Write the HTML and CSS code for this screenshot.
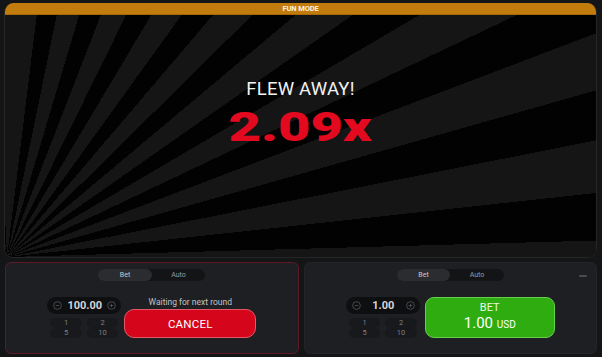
FILE: index.html
```html
<!DOCTYPE html>
<html>
<head>
<meta charset="utf-8">
<link rel="stylesheet" href="styles.css">
</head>
<body>
<div class="app">
  <div class="game">
    <div class="fun-bar">FUN MODE</div>
    <div class="stage">
      <div class="flew">FLEW AWAY!</div>
      <div class="mult"><span>2.09x</span></div>
    </div>
  </div>
  <div class="controls">
    <div class="panel panel-live">
      <div class="tabs"><span class="tab on">Bet</span><span class="tab">Auto</span></div>
      <div class="bet-row">
        <div class="amount">
          <div class="stepper">
            <svg class="step-ic" viewBox="0 0 10 10"><circle cx="5" cy="5" r="4.3"/><path d="M3 5h4"/></svg>
            <span class="value">100.00</span>
            <svg class="step-ic" viewBox="0 0 10 10"><circle cx="5" cy="5" r="4.3"/><path d="M3 5h4M5 3v4"/></svg>
          </div>
          <div class="quick"><span>1</span><span>2</span><span>5</span><span>10</span></div>
        </div>
        <div class="action">
          <div class="waiting">Waiting for next round</div>
          <button class="btn cancel">CANCEL</button>
        </div>
      </div>
    </div>
    <div class="panel">
      <span class="collapse"></span>
      <div class="tabs"><span class="tab on">Bet</span><span class="tab">Auto</span></div>
      <div class="bet-row">
        <div class="amount">
          <div class="stepper">
            <svg class="step-ic" viewBox="0 0 10 10"><circle cx="5" cy="5" r="4.3"/><path d="M3 5h4"/></svg>
            <span class="value">1.00</span>
            <svg class="step-ic" viewBox="0 0 10 10"><circle cx="5" cy="5" r="4.3"/><path d="M3 5h4M5 3v4"/></svg>
          </div>
          <div class="quick"><span>1</span><span>2</span><span>5</span><span>10</span></div>
        </div>
        <button class="btn bet">
          <span class="bet-label">BET</span>
          <span class="bet-amt">1.00 <small>USD</small></span>
        </button>
      </div>
    </div>
  </div>
</div>
</body>
</html>
```
FILE: styles.css
```css
* { box-sizing: border-box; }
html, body { margin: 0; padding: 0; }
body {
  width: 602px;
  height: 357px;
  background: #141517;
  font-family: Roboto, "Noto Sans", "Liberation Sans", sans-serif;
  color: #fff;
  overflow: hidden;
}
.app {
  display: flex;
  flex-direction: column;
  gap: 4px;
  padding: 3px 5px 0 4px;
}
.game {
  height: 255px;
  border-radius: 9px;
  border: 1px solid #262628;
  border-top: none;
  overflow: hidden;
  display: flex;
  flex-direction: column;
  background: #000;
}
.fun-bar {
  height: 12px;
  background: #c27b0d;
  border-bottom: 1px solid #a4670a;
  font-size: 7.5px;
  font-weight: 700;
  line-height: 12px;
  text-align: center;
  color: #fff4e0;
  letter-spacing: -0.1px;
}
.stage {
  flex: 1;
  display: flex;
  flex-direction: column;
  align-items: center;
  padding-top: 64px;
  background: repeating-conic-gradient(from 2deg at 2px 100%, #151515 0deg 5deg, #020202 5deg 9.6deg);
}
.flew {
  font-size: 18.5px;
  line-height: 20px;
  color: #f2f2f2;
  letter-spacing: 0.2px;
}
.mult {
  margin-top: 9px;
  height: 40px;
  line-height: 40px;
  font-size: 40px;
  font-weight: 900;
  color: #e3091f;
}
.mult span {
  display: inline-block;
  transform: scaleX(1.4);
}
.controls {
  display: grid;
  grid-template-columns: 1fr 1fr;
  gap: 5px;
  padding-left: 1px;
}
.panel {
  position: relative;
  height: 92px;
  background: #1e1f22;
  border: 1px solid #232427;
  border-radius: 6px;
  display: flex;
  flex-direction: column;
  align-items: center;
  padding-top: 6px;
}
.panel-live {
  border-color: #5e1a22;
}
.tabs {
  display: flex;
  width: 107px;
  height: 12px;
  background: #131416;
  border-radius: 6px;
}
.tab {
  flex: 1;
  font-size: 7px;
  line-height: 12px;
  text-align: center;
  color: #9a9a9c;
  border-radius: 6px;
}
.tab.on {
  background: #2b2c30;
  color: #c8c8ca;
}
.collapse {
  position: absolute;
  right: 9px;
  top: 12px;
  width: 8px;
  height: 2px;
  border-radius: 1px;
  background: #4a4b4f;
}
.bet-row {
  display: flex;
  gap: 3px;
  margin-top: 16px;
  height: 41px;
}
.amount {
  width: 74px;
  display: flex;
  flex-direction: column;
  gap: 3.5px;
}
.stepper {
  height: 17px;
  background: #0e0f11;
  border-radius: 9px;
  display: flex;
  align-items: center;
  justify-content: space-between;
  padding: 0 5px 0 6px;
}
.step-ic {
  width: 9px;
  height: 9px;
  fill: none;
  stroke: #56575b;
  stroke-width: 0.9;
}
.value {
  font-size: 11px;
  font-weight: 700;
  color: #d6d6d8;
}
.quick {
  display: grid;
  grid-template-columns: 1fr 1fr;
  gap: 0.5px 5px;
  padding: 0 3px;
}
.quick span {
  height: 10px;
  line-height: 10px;
  font-size: 7.5px;
  text-align: center;
  color: #7d7e82;
  background: #18191c;
  border-radius: 5px;
}
.action {
  width: 132px;
  display: flex;
  flex-direction: column;
}
.waiting {
  height: 12px;
  line-height: 10px;
  font-size: 8.5px;
  color: #c2c2c4;
  text-align: center;
}
.btn {
  font-family: Roboto, "Noto Sans", "Liberation Sans", sans-serif;
  color: #fff;
  padding: 0;
  cursor: pointer;
}
.cancel {
  height: 29px;
  border-radius: 10px;
  background: #d5061c;
  border: 1px solid #e55766;
  font-size: 11.5px;
  letter-spacing: 0.2px;
}
.bet {
  width: 130px;
  height: 41px;
  border-radius: 9px;
  background: #2fac0f;
  border: 1px solid #67cf4c;
  display: flex;
  flex-direction: column;
  align-items: center;
  justify-content: center;
  gap: 1px;
  margin-left: 2px;
}
.bet-label {
  font-size: 11px;
  line-height: 12px;
  color: #eaf7e4;
}
.bet-amt {
  font-size: 15px;
  line-height: 16px;
  color: #fff;
}
.bet-amt small {
  font-size: 10px;
}
```
